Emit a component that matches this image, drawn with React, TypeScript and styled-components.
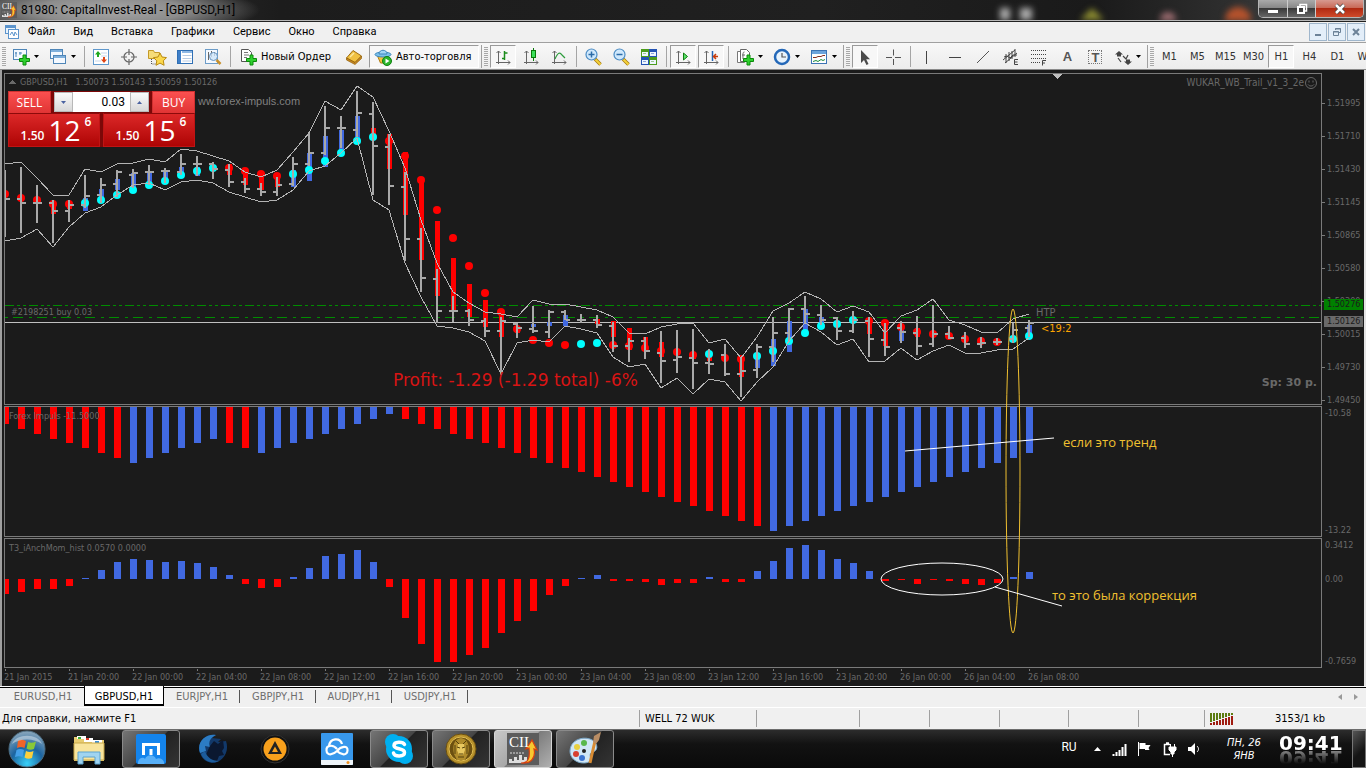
import React from 'react';
import styled, { createGlobalStyle, css } from 'styled-components';

const UI = '"DejaVu Sans Condensed", "DejaVu Sans", sans-serif';
const SEGOE = '"Open Sans", "Noto Sans", sans-serif';
const MENU = 'Roboto, "Open Sans", sans-serif';
const INK = '#1b1b1b';
const GRAY = '#696969';
const RED = '#ff0000';
const BLUE = '#4169e1';
const CYAN = '#00ffff';
const SILVER = '#a9a9a9';
const BAND = '#b4b4b4';
const GOLD = '#f0c030';
const GREEN = '#008c00';

const GlobalStyle = createGlobalStyle`
  * { box-sizing: border-box; }
  html, body { margin: 0; padding: 0; }
  body { background: ${INK}; font-family: ${UI}; font-size: 11px; }
  button, input { font: inherit; color: inherit; }
  svg { display: block; flex: none; }
`;

/* ---------- chart data ---------- */

// Chart space: bar i is centred on x = 5 + 16 * i.
const barX = (i: number) => 5 + 16 * i;

type Tone = 'r' | 'b' | '';
type Candle = [number, number, number, number, Tone, number, number, 'r' | 'c', number];
// high, low, open, close, body tone, body top, body bottom, dot tone, dot y
const candles: Candle[] = [
  [170, 237, 199, 199, '', 0, 0, 'r', 194],
  [167, 233, 199, 203, '', 0, 0, 'r', 198],
  [185, 223, 203, 203, '', 0, 0, 'r', 200],
  [200, 243, 203, 211, 'r', 203, 214, 'r', 204],
  [200, 222, 211, 205, 'r', 202, 209, 'r', 204],
  [175, 208, 205, 196, 'b', 198, 211, 'c', 203],
  [178, 203, 195, 185, 'b', 189, 200, 'c', 200],
  [170, 197, 184, 172, 'b', 179, 190, 'c', 195],
  [169, 188, 175, 173, 'b', 173, 187, 'c', 190],
  [165, 185, 172, 172, 'b', 172, 183, 'c', 185],
  [168, 183, 171, 171, 'b', 172, 180, 'c', 181],
  [154, 175, 172, 164, 'b', 167, 175, 'c', 175],
  [156, 176, 164, 164, 'b', 167, 176, 'c', 171],
  [162, 179, 164, 169, '', 0, 0, 'c', 168],
  [164, 187, 170, 182, 'r', 164, 175, 'r', 168],
  [178, 193, 182, 189, 'r', 168, 185, 'r', 171],
  [183, 196, 189, 192, 'r', 172, 190, 'r', 174],
  [177, 196, 192, 185, 'r', 174, 187, 'r', 176],
  [157, 186, 184, 164, 'b', 170, 187, 'c', 174],
  [132, 166, 164, 153, 'b', 153, 181, 'c', 170],
  [106, 155, 153, 128, 'b', 136, 167, 'c', 161],
  [116, 148, 128, 128, 'b', 130, 150, 'c', 153],
  [91, 137, 130, 113, 'b', 116, 140, 'c', 141],
  [102, 195, 114, 146, 'r', 128, 134, 'c', 137],
  [134, 205, 147, 186, 'r', 134, 169, 'r', 141],
  [172, 261, 187, 239, 'r', 152, 215, 'r', 156],
  [228, 292, 239, 278, 'r', 180, 260, 'r', 180],
  [269, 323, 279, 311, 'r', 221, 296, 'r', 210],
  [296, 322, 311, 311, 'r', 258, 310, 'r', 238],
  [309, 326, 311, 320, 'r', 284, 317, 'r', 266],
  [318, 337, 321, 331, 'r', 300, 327, 'r', 293],
  [317, 375, 331, 321, 'r', 310, 337, 'r', 312],
  [323, 338, 324, 328, 'r', 327, 333, 'r', 329],
  [306, 333, 329, 331, 'b', 324, 327, 'r', 340],
  [310, 338, 332, 312, 'b', 322, 326, 'r', 343],
  [310, 320, 312, 320, 'b', 315, 326, 'r', 345],
  [314, 323, 320, 320, '', 0, 0, 'c', 344],
  [315, 328, 320, 325, 'r', 319, 324, 'c', 343],
  [322, 352, 326, 346, 'r', 321, 337, 'r', 345],
  [338, 362, 346, 341, 'r', 328, 350, 'r', 346],
  [337, 359, 341, 351, 'r', 337, 350, 'r', 348],
  [331, 383, 353, 361, 'r', 342, 357, 'r', 351],
  [330, 373, 360, 357, '', 0, 0, 'r', 352],
  [329, 389, 358, 363, 'r', 353, 359, 'r', 355],
  [349, 374, 363, 364, 'r', 355, 361, 'c', 354],
  [344, 376, 355, 374, '', 0, 0, 'r', 358],
  [357, 397, 374, 371, 'r', 358, 377, 'r', 359],
  [344, 378, 370, 347, 'b', 355, 368, 'c', 356],
  [317, 362, 347, 333, 'b', 339, 366, 'c', 351],
  [308, 342, 333, 309, 'b', 321, 352, 'c', 341],
  [296, 323, 309, 314, 'b', 309, 330, 'c', 333],
  [305, 325, 315, 320, 'b', 317, 327, 'c', 326],
  [317, 340, 318, 331, '', 0, 0, 'c', 324],
  [311, 333, 331, 320, '', 0, 0, 'c', 320],
  [317, 357, 321, 339, 'r', 318, 334, 'r', 321],
  [323, 356, 340, 347, 'r', 322, 346, 'r', 323],
  [321, 343, 328, 332, 'b', 328, 341, 'r', 327],
  [316, 355, 333, 346, 'r', 328, 337, 'r', 332],
  [305, 347, 344, 334, '', 0, 0, 'r', 334],
  [326, 339, 334, 338, '', 0, 0, 'r', 336],
  [332, 348, 338, 344, '', 0, 0, 'r', 339],
  [337, 348, 344, 343, '', 0, 0, 'r', 341],
  [338, 345, 342, 342, '', 0, 0, 'r', 342],
  [323, 343, 339, 330, '', 0, 0, 'c', 339],
  [320, 337, 328, 323, 'b', 325, 335, 'c', 336],
];

const upper = [164, 162, 178, 195, 195, 169, 172, 164, 163, 159, 162, 149, 151, 156, 161, 172, 177, 170, 152, 133, 101, 110, 86, 97, 131, 168, 220, 263, 292, 303, 312, 314, 317, 300, 304, 304, 307, 310, 317, 333, 334, 327, 324, 323, 343, 339, 358, 337, 311, 303, 292, 299, 312, 306, 312, 333, 316, 310, 299, 320, 325, 332, 333, 319, 314];
const lower = [241, 238, 229, 247, 227, 213, 207, 195, 185, 183, 190, 182, 180, 183, 192, 197, 202, 200, 190, 171, 166, 153, 138, 200, 210, 263, 297, 326, 328, 332, 341, 374, 343, 340, 342, 326, 329, 333, 357, 367, 364, 388, 378, 394, 379, 382, 401, 382, 367, 341, 323, 332, 345, 339, 362, 361, 348, 360, 351, 345, 353, 353, 350, 349, 338];

const impulseDepth = [7, 12, 17, 22, 27, 32, 36, 41, 46, 51, 56, 61, 65, 70, 75, 80, 85, 90, 95, 99, 104, 109, 114, 119, 124];
const impulse: [number, Tone][] = [
  ...[2, 3, 4, 5, 6, 7, 8, 9].map((l): [number, Tone] => [l, 'r']),
  ...[10, 9, 8, 7, 6, 5].map((l): [number, Tone] => [l, 'b']),
  ...[6, 7].map((l): [number, Tone] => [l, 'r']),
  ...[8, 7, 6, 5, 4, 3, 2, 1, 0].map((l): [number, Tone] => [l, 'b']),
  ...Array.from({ length: 23 }, (_, k): [number, Tone] => [k + 1, 'r']),
  ...Array.from({ length: 17 }, (_, k): [number, Tone] => [24 - k, 'b']),
];

const momentum = [-15, -13, -10, -10, -7, 1, 9, 17, 20, 19, 17, 18, 16, 12, 4, -5, -9, -8, 2, 11, 23, 25, 29, 17, -8, -39, -65, -83, -83, -76, -69, -54, -42, -32, -16, -7, 1, 4, -2, -2, -3, -6, -4, -4, 2, -3, -3, 8, 18, 31, 34, 29, 20, 16, 8, -2, -1, -5, -1, -2, -5, -6, -4, 2, 7];

const dates = ['21 Jan 2015', '21 Jan 20:00', '22 Jan 00:00', '22 Jan 04:00', '22 Jan 08:00', '22 Jan 12:00', '22 Jan 16:00', '22 Jan 20:00', '23 Jan 00:00', '23 Jan 04:00', '23 Jan 08:00', '23 Jan 12:00', '23 Jan 16:00', '23 Jan 20:00', '26 Jan 00:00', '26 Jan 04:00', '26 Jan 08:00'];
const prices = ['1.51995', '1.51710', '1.51430', '1.51145', '1.50865', '1.50580', '1.50300', '1.50015', '1.49730', '1.49450'];

/* ---------- frame ---------- */

const Screen = styled.div`
  display: flex;
  flex-direction: column;
  min-height: 100vh;
  overflow: hidden;
`;

const TitleBar = styled.header`
  position: relative;
  display: flex;
  align-items: center;
  height: 21px;
  padding-left: 1px;
  overflow: hidden;
  border-bottom: 1px solid #b8b8b8;
  background:
    radial-gradient(ellipse 150px 26px at 110px 10px, #a8a8a8 0, #8c8c8c 50%, transparent 100%),
    linear-gradient(90deg, #3a3a3a 0, #1c1c1c 280px, #202020 60%, #1a1a1a 80%, #2e2e2e 90%, #555 100%);
`;

const TitleText = styled.h1`
  margin: 0 0 0 4px;
  font: 400 12px/20px ${MENU};
  color: #000;
  white-space: nowrap;
`;

const Blobs = styled.svg`
  position: absolute;
  right: 84px;
  top: 0;
  filter: blur(3px);
`;

const WindowButtons = styled.div`
  display: flex;
  align-self: flex-start;
  height: 18px;
  margin-left: auto;
  margin-right: 2px;
  border: 1px solid #b5b5b5;
  border-top: 0;
  border-radius: 0 0 5px 5px;
  overflow: hidden;
  z-index: 1;
`;

const WindowButton = styled.button<{ $close?: boolean }>`
  display: flex;
  align-items: center;
  justify-content: center;
  width: ${(p) => (p.$close ? 48 : 28)}px;
  padding: 0;
  border: 0;
  background: ${(p) =>
    p.$close
      ? 'linear-gradient(#d79a90 0, #c96a58 45%, #b02a12 50%, #cf4a2a 100%)'
      : 'linear-gradient(#aaa 0, #888 45%, #3a3a3a 50%, #666 100%)'};
  & + & { border-left: 1px solid #ccc; }
`;

const MenuBar = styled.nav`
  display: flex;
  align-items: center;
  height: 22px;
  padding: 0 1px 0 5px;
  background: #f0f0f0;
  border-top: 1px solid #222;
  border-bottom: 1px solid #a0a0a0;
  font: 11px/18px ${MENU};
  color: #000;
`;

const MenuItems = styled.div`
  display: flex;
  gap: 18px;
  margin-left: 9px;
`;

const MenuItem = styled.button`
  padding: 0;
  border: 0;
  background: none;
  white-space: nowrap;
`;

const ChildButtons = styled.div`
  display: flex;
  gap: 1px;
  margin-left: auto;
`;

const ChildButton = styled.button`
  display: flex;
  align-items: center;
  justify-content: center;
  width: 18px;
  height: 18px;
  padding: 0;
  border: 1px solid #9fb6cc;
  background: #e3eef9;
`;

/* ---------- toolbar ---------- */

const ToolBar = styled.div`
  display: flex;
  align-items: center;
  height: 27px;
  padding-top: 1px;
  overflow: hidden;
  background: linear-gradient(#f8f8f8, #ececec);
  border-bottom: 1px solid #8a8a8a;
  color: #333;
`;

const ToolGroup = styled.div`
  display: flex;
  flex: none;
  align-items: center;
  padding-left: 2px;
  & + & { border-left: 1px solid #a0a0a0; }
`;

const Grip = styled.span`
  width: 4px;
  height: 19px;
  margin-right: 2px;
  background: repeating-linear-gradient(#a8a8a8 0 1px, #f4f4f4 1px 2px);
`;

const ToolButton = styled.button<{ $on?: boolean; $menu?: boolean; $label?: boolean }>`
  display: flex;
  flex: none;
  align-items: center;
  justify-content: center;
  gap: 4px;
  width: 26px;
  height: 23px;
  margin-right: 2px;
  padding: 0;
  border: 1px solid transparent;
  background: none;
  white-space: nowrap;
  ${(p) => p.$on && css`
    border-color: #9a9a9a #fff #fff #9a9a9a;
    background: #f7f7f7;
  `}
  ${(p) => p.$menu && css`
    width: 35px;
    justify-content: flex-start;
    padding-left: 3px;
  `}
  ${(p) => p.$label && css`
    width: auto;
    padding: 0 7px 0 4px;
    color: #000;
  `}
`;

const Divider = styled.span`
  flex: none;
  width: 1px;
  height: 21px;
  margin: 0 3px 0 2px;
  background: #a5a5a5;
`;

/* ---------- chart window ---------- */

const ChartWindow = styled.main`
  position: relative;
  display: flex;
  flex: 1 0 auto;
  flex-direction: column;
  padding: 3px 1px 0 4px;
  background: ${INK};
  border-right: 2px solid #e4e4e4;
  color: ${GRAY};
  font-size: 9px;
  &::before {
    content: '';
    position: absolute;
    left: 0;
    top: 0;
    bottom: 0;
    width: 2px;
    background: #a0a0a0;
  }
`;

const Pane = styled.section<{ $height: number }>`
  display: flex;
  flex: ${(p) => p.$height} 0 ${(p) => p.$height}px;
  margin-bottom: 1px;
`;

const Plot = styled.div`
  position: relative;
  flex: 1;
  min-width: 0;
  overflow: hidden;
  border: 1px solid #7a7a7a;
`;

const PlotArt = styled.svg`
  position: absolute;
  inset: 0;
  width: 100%;
  height: 100%;
`;

const Scale = styled.div<{ $spread?: boolean }>`
  position: relative;
  display: flex;
  flex-direction: column;
  justify-content: ${(p) => (p.$spread ? 'space-between' : 'flex-start')};
  width: 41px;
  padding-top: ${(p) => (p.$spread ? 0 : 25)}px;
`;

const PriceLabel = styled.span`
  position: relative;
  height: 33px;
  padding-left: 5px;
  line-height: 10px;
  &:last-of-type { height: 10px; }
  &::before {
    content: '';
    position: absolute;
    left: 0;
    top: 5px;
    width: 3px;
    height: 1px;
    background: #7a7a7a;
  }
`;

const ScaleEnd = styled.span`
  padding-left: 3px;
  line-height: 14px;
`;

const ZeroLabel = styled(ScaleEnd)`
  position: absolute;
  top: 34px;
`;

const PriceTag = styled.strong<{ $top: number; $bg: string }>`
  position: absolute;
  left: 2px;
  right: 0;
  top: ${(p) => p.$top}px;
  padding-left: 3px;
  background: ${(p) => p.$bg};
  color: ${INK};
  font-weight: 400;
  line-height: 11px;
`;

const PlotNote = styled.span<{ $top: number; $indent?: boolean }>`
  position: absolute;
  left: ${(p) => (p.$indent ? 15 : 4)}px;
  top: ${(p) => p.$top}px;
  line-height: 12px;
  white-space: pre;
`;

const Expert = styled.span`
  position: absolute;
  right: 4px;
  top: 3px;
  display: flex;
  align-items: center;
  gap: 1px;
  font-size: 10px;
  line-height: 12px;
`;

const Spread = styled.span`
  position: absolute;
  right: 4px;
  bottom: 14px;
  font: 700 11px/14px "DejaVu Sans", sans-serif;
`;

const TimeAxis = styled.div`
  display: flex;
  height: 17px;
  overflow: hidden;
`;

const TimeLabel = styled.span`
  position: relative;
  flex: none;
  width: 64px;
  line-height: 17px;
  white-space: nowrap;
  &::before {
    content: '';
    position: absolute;
    left: 1px;
    top: 0;
    width: 1px;
    height: 2px;
    background: #7a7a7a;
  }
`;

const Annotations = styled.svg`
  position: absolute;
  inset: 0;
  width: 100%;
  height: 100%;
  pointer-events: none;
`;

/* ---------- one-click trading ---------- */

const TradePanel = styled.form`
  position: absolute;
  left: 3px;
  top: 17px;
  width: 187px;
  background: #7c0808;
  color: #fff;
  font-family: ${SEGOE};
`;

const TradeRow = styled.div<{ $prices?: boolean }>`
  display: flex;
  justify-content: space-between;
  gap: 3px;
  height: ${(p) => (p.$prices ? 34 : 22)}px;
`;

const SideButton = styled.button`
  flex: none;
  width: 43px;
  padding: 0;
  border: 1px solid #d03030;
  border-bottom: 0;
  background: linear-gradient(#fb5050, #e03434);
  font-size: 12px;
  line-height: 20px;
`;

const Stepper = styled.div`
  display: flex;
  flex: 1;
  min-width: 0;
  height: 20px;
  margin-top: 1px;
  background: #fff;
`;

const StepButton = styled.button`
  display: flex;
  flex: none;
  align-items: center;
  justify-content: center;
  width: 19px;
  padding: 0;
  border: 1px solid #b8b8b8;
  background: linear-gradient(#fafafa, #d8d8d8);
`;

const Volume = styled.input`
  flex: 1;
  width: 0;
  min-width: 0;
  padding: 0 5px;
  border: 0;
  background: #fff;
  color: #000;
  font: 12px/20px ${MENU};
  text-align: right;
`;

const PriceButton = styled.button`
  display: flex;
  flex: 1;
  align-items: flex-end;
  justify-content: center;
  gap: 4px;
  padding: 0 0 1px 4px;
  border: 1px solid #c01414;
  border-top-color: #8c0a0a;
  background: linear-gradient(#dc2828, #ae0404);
`;

const PriceSmall = styled.span`
  font-size: 12px;
  font-weight: 600;
  line-height: 18px;
`;

const PriceBig = styled.span`
  font-size: 28px;
  line-height: 30px;
`;

const PriceTick = styled.span`
  align-self: flex-start;
  font-size: 12px;
  font-weight: 600;
  line-height: 16px;
`;

/* ---------- tabs and status ---------- */

const TabBar = styled.nav`
  display: flex;
  height: 22px;
  padding-left: 2px;
  background: #f0f0f0;
  border-bottom: 1px solid #fff;
  box-shadow: inset 0 1px #fff, inset 0 2px #000;
  font-size: 11px;
  color: #6e6e6e;
`;

const Tab = styled.a<{ $active?: boolean; $first?: boolean }>`
  position: relative;
  width: ${(p) => (p.$active ? 80 : p.$first ? 82 : 76)}px;
  height: 20px;
  color: inherit;
  line-height: 21px;
  text-align: center;
  text-decoration: none;
  ${(p) => p.$active && css`
    border: solid #000;
    border-width: 0 1px 2px;
    background: #fff;
    color: #000;
  `}
  ${(p) => !p.$active && !p.$first && css`
    &::after {
      content: '';
      position: absolute;
      right: 0;
      top: 4px;
      width: 1px;
      height: 13px;
      background: #555;
    }
  `}
`;

const TabArrows = styled.div`
  display: flex;
  align-items: center;
  gap: 4px;
  margin-left: auto;
  padding-right: 4px;
`;

const ArrowButton = styled.button`
  padding: 3px 4px;
  border: 0;
  background: none;
`;

const StatusBar = styled.footer`
  display: flex;
  align-items: center;
  height: 21px;
  background: #f0f0f0;
  color: #000;
  font-size: 11px;
`;

const StatusHelp = styled.span`
  flex: 1;
  padding-left: 2px;
  white-space: nowrap;
`;

const StatusCell = styled.span<{ $width: number }>`
  display: flex;
  flex: none;
  align-items: center;
  width: ${(p) => p.$width}px;
  height: 17px;
  padding-left: 5px;
  border-left: 1px solid #a0a0a0;
`;

const Traffic = styled.span`
  flex: 1;
  padding-right: 41px;
  text-align: right;
`;

/* ---------- task bar ---------- */

const TaskBar = styled.div`
  display: flex;
  align-items: center;
  height: 39px;
  border-top: 1px solid #6c6c6c;
  background: linear-gradient(#2c2c2c 0, #121212 14px, #0a0a0a 100%);
  color: #fff;
`;

const StartButton = styled.button`
  width: 54px;
  height: 38px;
  margin-right: 6px;
  padding: 0 0 0 8px;
  border: 0;
  background: none;
`;

const Task = styled.button<{ $state?: 'open' | 'active' }>`
  display: flex;
  align-items: center;
  justify-content: center;
  width: 58px;
  height: 38px;
  margin-right: 4px;
  padding: 0;
  border: 1px solid transparent;
  border-radius: 3px;
  background: none;
  ${(p) => p.$state === 'open' && css`
    border-color: #8a8a8a;
    background: linear-gradient(135deg, #757575 0, #454545 48%, #222 50%, #343434 100%);
  `}
  ${(p) => p.$state === 'active' && css`
    border-color: #d5d5d5;
    background: linear-gradient(135deg, #c8c8c8 0, #a8a8a8 48%, #7c7c7c 50%, #b0b0b0 100%);
  `}
`;

const Tray = styled.div`
  display: flex;
  align-items: center;
  height: 100%;
  margin-left: auto;
`;

const Lang = styled.button`
  width: 18px;
  margin: 0 15px 4px 0;
  padding: 0;
  border: 0;
  background: none;
  font: 12px/16px ${MENU};
`;

const TrayIcons = styled.div`
  display: flex;
  align-items: center;
  gap: 10px;
`;

const DateText = styled.div`
  width: 50px;
  margin-left: 18px;
  font: italic 400 11px/13px ${UI};
  text-align: center;
`;

const Clock = styled.time`
  width: 66px;
  margin: -12px 7px 0 10px;
  font: 700 20px/20px "DejaVu Sans", sans-serif;
  -webkit-box-reflect: below -5px linear-gradient(transparent 20%, rgba(255, 255, 255, 0.6));
`;

const ShowDesktop = styled.button`
  width: 14px;
  height: 38px;
  padding: 0;
  border: 1px solid #777;
  background: linear-gradient(135deg, #555, #151515 60%);
`;

/* ---------- icons ---------- */

const Icon = ({ w = 18, h = w, children }: { w?: number; h?: number; children: React.ReactNode }) => (
  <svg width={w} height={h} viewBox={`0 0 ${w} ${h}`} fill="none" aria-hidden="true">{children}</svg>
);

const Caret = () => (
  <svg width="5" height="3" viewBox="0 0 5 3" aria-hidden="true"><path d="M0 0H5L2.5 3Z" fill="#000" /></svg>
);

const Plus = () => (
  <path d="M11 7h3v3.500h3.500v3h-3.500v3.500h-3v-3.500h-3.500v-3h3.500z" fill="#2fd02f" stroke="#0a8a0a" />
);

const Axes = () => (
  <path d="M4.500 16V3M2.500 5L4.500 3L6.500 5M2 14.500H16M14 12.500L16 14.500L14 16.500" stroke="#666" />
);

const NewChart = () => (
  <Icon>
    <rect x="1.500" y="1.500" width="13" height="10" fill="#f4f9ff" stroke="#4f86b8" />
    <path d="M4 4v5M3 5h2M8 4v3M7 5h3" stroke="#4f86b8" />
    <Plus />
  </Icon>
);
const Profiles = () => (
  <Icon>
    <rect x="1.500" y="1.500" width="12" height="9" fill="#f4f9ff" stroke="#4f86b8" />
    <path d="M2 3H13" stroke="#7fb0dc" strokeWidth="2" />
    <rect x="4.500" y="7.500" width="12" height="8" fill="#f4f9ff" stroke="#4f86b8" />
    <path d="M5 9H16" stroke="#7fb0dc" strokeWidth="2" />
  </Icon>
);
const Market = () => (
  <Icon>
    <rect x="1.500" y="1.500" width="15" height="15" fill="#fff" stroke="#5f98cc" />
    <path d="M9 5h6M3 13h6M9 8h6" stroke="#c8d8ea" />
    <path d="M6 3l3 3.500h-2v2.500h-2v-2.500h-2z" fill="#1fa81f" />
    <path d="M12 15l3-3.500h-2v-2.500h-2v2.500h-2z" fill="#e04414" />
  </Icon>
);
const Crosshair = () => (
  <Icon>
    <circle cx="9" cy="9" r="5" stroke="#666" strokeWidth="1.200" />
    <path d="M9 1V7M9 11V17M1 9H7M11 9H17" stroke="#666" strokeWidth="1.200" />
  </Icon>
);
const Favorites = () => (
  <Icon w={20} h={18}>
    <path d="M1.500 2.500h5l1 2h5v6h-11z" fill="#f6dc78" stroke="#c49a28" />
    <path d="M4.500 11v5h4" stroke="#555" strokeDasharray="1 1" />
    <path d="M13 5l2 4 4.500.6-3.200 3.200.8 4.500-4.100-2.200-4 2.200.8-4.500L6.500 9.600 11 9z" fill="#fbd84c" stroke="#b98a10" />
  </Icon>
);
const Terminal = () => (
  <Icon>
    <rect x="1.500" y="2.500" width="15" height="13" fill="#fff" stroke="#2f6fb4" />
    <rect x="2" y="3" width="3" height="12" fill="#3f7fc8" />
    <path d="M6 4H16" stroke="#8fb8e4" strokeWidth="2" />
    <path d="M6.500 7.500h9M6.500 10.500h9M6.500 13h9" stroke="#b8cce4" />
  </Icon>
);
const Tester = () => (
  <Icon>
    <rect x="1.500" y="1.500" width="12" height="14" fill="#f4f9ff" stroke="#6c9cc8" />
    <path d="M4.500 4v8M7.500 3v6M10.500 4v4" stroke="#666" />
    <circle cx="9.500" cy="8.500" r="4" fill="#cfe6fa" fillOpacity=".8" stroke="#6894c0" />
    <path d="M12.500 12l4 4" stroke="#c8902c" strokeWidth="2.500" />
  </Icon>
);
const OrderIcon = () => (
  <Icon>
    <path d="M2.500 1.500h7l3 3v9h-10z" fill="#fff" stroke="#555" />
    <path d="M5 4.500h4M5 7h5M5 9.500h3" stroke="#777" />
    <Plus />
  </Icon>
);
const Book = () => (
  <Icon>
    <path d="M1.500 10L8 2.500L16.500 8L10 14.500Z" fill="#f0c040" stroke="#a06c10" />
    <path d="M1.500 10L10 14.500L16.500 8V10.500L10 16.500L1.500 12Z" fill="#c88820" stroke="#90600c" strokeWidth=".7" />
    <path d="M5 9L9 5" stroke="#fbe8a0" strokeWidth="1.500" />
  </Icon>
);
const AutoTrade = () => (
  <Icon>
    <path d="M3.500 8h11l-3 7h-5z" fill="#f4c23c" stroke="#b07c14" />
    <ellipse cx="9" cy="6.500" rx="8" ry="2.500" fill="#7cc0ea" stroke="#3f88bc" />
    <path d="M5 6c0-5 8-5 8 0z" fill="#a0d4f4" stroke="#3f88bc" />
    <circle cx="13" cy="13" r="4.500" fill="#2cb52c" stroke="#108010" />
    <path d="M11.500 10.500v5l4-2.500z" fill="#fff" />
  </Icon>
);
const BarsIcon = () => <Icon><Axes /><path d="M10.500 3V12M8 10.500h2.500M10.500 5h3" stroke="#1c8c1c" strokeWidth="1.500" /></Icon>;
const CandleIcon = () => <Icon><Axes /><path d="M11.500 0V13" stroke="#0a7a0a" /><rect x="9.500" y="2.500" width="4" height="7" fill="#3ce05c" stroke="#0a7a0a" /></Icon>;
const LineIcon = () => <Icon><Axes /><path d="M5 11C8 4 10 4 12 7L15 10" stroke="#2c9c3c" strokeWidth="1.200" /></Icon>;
const Zoom = ({ plus }: { plus?: boolean }) => (
  <Icon>
    <path d="M11 11l5.500 5.500" stroke="#a87c10" strokeWidth="3.500" />
    <path d="M11.500 11.500l5 5" stroke="#f4d23c" strokeWidth="2" />
    <circle cx="7.500" cy="6.500" r="5.500" fill="#cfe8fc" stroke="#4c8cc4" strokeWidth="1.200" />
    <path d={plus ? 'M4.500 6.500h6M7.500 3.500v6' : 'M4.500 6.500h6'} stroke="#2c6ca8" strokeWidth="1.500" />
  </Icon>
);
const Tile = () => (
  <Icon>
    {[[1, 1, '#4c9c1c'], [9, 1, '#2454b4'], [1, 9, '#2454b4'], [9, 9, '#4c9c1c']].map(([x, y, c]) => (
      <g key={`${x}-${y}`}>
        <rect x={Number(x)} y={Number(y)} width="8" height="8" fill={String(c)} />
        <rect x={Number(x) + 1} y={Number(y) + 3} width="6" height="4" fill="#eef6ff" />
        <rect x={Number(x) + 2} y={Number(y) + 4} width="3" height="1" fill={String(c)} fillOpacity=".5" />
      </g>
    ))}
  </Icon>
);
const Scroll = () => <Icon><Axes /><path d="M9.500 5v7l4-3.500z" fill="#5ce06c" stroke="#108010" /></Icon>;
const Shift = () => <Icon><Axes /><path d="M10.500 3V13" stroke="#2464b4" strokeWidth="1.500" /><path d="M16 8.500h-4M14 6l-2.500 2.500l2.500 2.500" stroke="#c83c0c" strokeWidth="1.500" /></Icon>;
const Indicators = () => (
  <Icon>
    <path d="M1.500 3.500h7v11h-7z" fill="#fff" stroke="#777" />
    <path d="M4.500 1.500h6l3 3v9h-9z" fill="#fff" stroke="#666" />
    <path d="M8.500 4c-2 0-1.500 2-1.500 7M6 7h3" stroke="#666" />
    <Plus />
  </Icon>
);
const ClockIcon = () => (
  <Icon>
    <circle cx="9" cy="9" r="7" fill="#e8f3fc" stroke="#2468b8" strokeWidth="2.500" />
    <path d="M9 5v4h4" stroke="#555" strokeWidth="1.200" />
  </Icon>
);
const Template = () => (
  <Icon>
    <rect x="1.500" y="2.500" width="15" height="13" fill="#fff" stroke="#3c74b4" />
    <rect x="2" y="3" width="14" height="3" fill="#6ca4dc" />
    <path d="M3 9.500h3l2-1h3l2-1h2" stroke="#883020" />
    <path d="M3 13.500l3-1 2 1 3-2 2 1 2-1" stroke="#1c8c3c" />
  </Icon>
);
const Cursor = () => <Icon><path d="M5 2V15L8 12L10.500 17L12.500 16L10.200 11.300H14Z" fill="#4a4a4a" /></Icon>;
const Cross = () => <Icon><path d="M9.500 1.500v6M9.500 11v6M2 9.500h6M11 9.500h6" stroke="#555" /></Icon>;
const VLine = () => <Icon><path d="M8.500 3v13" stroke="#444" /></Icon>;
const HLine = () => <Icon><path d="M3 9.500h12" stroke="#444" /></Icon>;
const Diagonal = () => <Icon><path d="M3 15L15 3" stroke="#555" /></Icon>;
const Channel = () => (
  <Icon>
    <path d="M1 12L13 2M3 15L15 5M4 6v9M7 4v9M10 3v8M13 1v8M2 9l3-1 3 2 3-3 4 0" stroke="#444" />
    <path d="M16 11.500h-3.500v5H16M12.500 14H15.500" stroke="#444" />
  </Icon>
);
const Fibo = () => (
  <Icon>
    <path d="M1 2.500h15M1 6.500h15M1 10.500h15M1 14.500h9" stroke="#444" strokeDasharray="1 1" />
    <path d="M16 12.500h-3.500v5M12.500 15H15" stroke="#444" />
  </Icon>
);
const Letter = styled.span`
  font: 700 13px/18px "Liberation Sans", sans-serif;
  color: #555;
`;
const TextLabel = styled(Letter)`
  width: 14px;
  height: 14px;
  border: 1px dotted #777;
  line-height: 13px;
  text-align: center;
`;
const Arrows = () => (
  <Icon>
    <path d="M5 3l4 3.500h-2v2h-4v-2h-2zM14 17l-4-3.500h2v-2h4v2h2z" fill="#444" />
    <path d="M4 10l3 4M9 8l3 3 2-4" stroke="#444" strokeWidth="1.200" />
  </Icon>
);

/* ---------- chart pieces ---------- */

const linePoints = (ys: number[]) => ys.map((y, i) => `${barX(i)},${y}`).join(' ');

const PriceArt = () => (
  <PlotArt aria-label="GBPUSD H1">
    <defs>
      <pattern id="take" width="24" height="1" patternUnits="userSpaceOnUse">
        <path d="M0 0h9v1H0zM12 0h3v1h-3zM18 0h3v1h-3z" fill={GREEN} />
      </pattern>
      <pattern id="entry" width="24" height="1" patternUnits="userSpaceOnUse">
        <path d="M0 0h3v1H0zM8 0h10v1H8z" fill={GREEN} />
      </pattern>
    </defs>
    <rect y="231" width="100%" height="1" fill="url(#take)" />
    <rect y="243" width="100%" height="1" fill="url(#entry)" />
    <rect y="248" width="100%" height="1" fill="#c0c0c0" />
    <g transform="translate(-5 -74)" shapeRendering="crispEdges">
      {candles.map(([, , , , tone, top, bottom], i) =>
        tone ? <rect key={i} x={barX(i) - 2} y={top} width="5" height={bottom - top} fill={tone === 'r' ? RED : BLUE} /> : null
      )}
      {candles.map((c, i) => (
        <circle key={i} cx={barX(i)} cy={c[8]} r="4" fill={c[7] === 'r' ? RED : CYAN} shapeRendering="auto" />
      ))}
      {candles.map(([high, low, open, close], i) => (
        <g key={i} fill={SILVER}>
          <rect x={barX(i) - 1} y={high} width="2" height={low - high} />
          <rect x={barX(i) - 4} y={open - 1} width="3" height="2" />
          <rect x={barX(i) + 1} y={close - 1} width="4" height="2" />
        </g>
      ))}
      <polyline points={linePoints(upper)} fill="none" stroke={BAND} />
      <polyline points={linePoints(lower)} fill="none" stroke={BAND} />
      <path d="M1052 74h10l-5 5z" fill="#c0c0c0" />
      <path d="M8 84h8l-4-4z" fill={GRAY} />
    </g>
    <text x="193" y="31" fontFamily="Liberation Sans, sans-serif" fontSize="11" fill="#808080">ww.forex-impuls.com</text>
    <text x="6" y="241" fontSize="9" fill={GRAY}>#2198251 buy 0.03</text>
    <text x="1031" y="242" fontSize="11" fill={GRAY}>HTP</text>
    <text x="1036" y="258" fontSize="11" fill="#ffa500">&lt;19:2</text>
    <text x="388" y="312" fontFamily="DejaVu Sans, sans-serif" fontSize="17" fill="#d81414">Profit: -1.29 (-1.29 total) -6%</text>
  </PlotArt>
);

const ImpulseArt = () => (
  <PlotArt aria-label="Forex Impuls">
    {impulse.map(([level, tone], i) => (
      <rect key={i} x={16 * i - 3} y="0" width="7" height={impulseDepth[level]} fill={tone === 'r' ? RED : BLUE} />
    ))}
  </PlotArt>
);

const MomentumArt = () => (
  <PlotArt aria-label="T3 momentum">
    {momentum.map((v, i) => (
      <rect key={i} x={16 * i - 3} y={v > 0 ? 40 - v : 40} width="7" height={Math.abs(v)} fill={v > 0 ? BLUE : RED} />
    ))}
  </PlotArt>
);

const Trade = () => (
  <TradePanel onSubmit={(e) => e.preventDefault()}>
    <TradeRow>
      <SideButton type="button">SELL</SideButton>
      <Stepper>
        <StepButton type="button" aria-label="Less"><Icon w={5} h={3}><path d="M0 0H5L2.500 3Z" fill="#4a62a0" /></Icon></StepButton>
        <Volume aria-label="Volume" defaultValue="0.03" />
        <StepButton type="button" aria-label="More"><Icon w={5} h={3}><path d="M0 3H5L2.500 0Z" fill="#4a62a0" /></Icon></StepButton>
      </Stepper>
      <SideButton type="button">BUY</SideButton>
    </TradeRow>
    <TradeRow $prices>
      {['12', '15'].map((p) => (
        <PriceButton key={p} type="button">
          <PriceSmall>1.50</PriceSmall><PriceBig>{p}</PriceBig><PriceTick>6</PriceTick>
        </PriceButton>
      ))}
    </TradeRow>
  </TradePanel>
);

const Cii = ({ size }: { size: number }) => (
  <svg width={size} height={size} viewBox="0 0 32 32" aria-hidden="true">
    <rect width="32" height="32" fill="#5c5c5c" />
    <path d="M2 30V26H5V28H7V24H10V27H12V22H15V27H17V24H20V30Z" fill="#ddd" />
    <path d="M3 20H18" stroke="#ddd" strokeDasharray="2 1" />
    <path d="M14 30C22 30 23 24 22 15L19 16L25 7L30 17L27 16C29 25 24 31 14 30Z" fill="#f8c830" stroke="#d84010" strokeWidth="1.200" />
    <text x="2" y="14" fontFamily="Liberation Serif, serif" fontSize="15" fill="#fff">CII</text>
  </svg>
);

/* ---------- page ---------- */

export default function App() {
  return (
    <Screen>
      <GlobalStyle />
      <TitleBar>
        <Cii size={16} />
        <TitleText>81980: CapitalInvest-Real - [GBPUSD,H1]</TitleText>
        <Blobs width="290" height="21" aria-hidden="true">
          <path d="M8 8H18V20H8zM28 8H40V20H28z" fill="#aaa" />
          <path d="M88 20l12-12 12 12z" fill="#8c8c30" />
          <circle cx="176" cy="20" r="8" fill="#9c6c70" />
          <circle cx="246" cy="20" r="13" fill="#b4522c" />
        </Blobs>
        <WindowButtons>
          <WindowButton aria-label="Minimize"><Icon w={12} h={12}><path d="M1 7h10v3H1z" fill="#fff" /></Icon></WindowButton>
          <WindowButton aria-label="Restore"><Icon w={12} h={12}><path d="M4 4V1.500H10.500V8H8" stroke="#fff" strokeWidth="1.500" /><rect x="2" y="4" width="6" height="6" stroke="#fff" strokeWidth="2" /></Icon></WindowButton>
          <WindowButton $close aria-label="Close"><Icon w={12} h={12}><path d="M2 2L10 10M10 2L2 10" stroke="#444" strokeWidth="4" /><path d="M2 2L10 10M10 2L2 10" stroke="#fff" strokeWidth="2.500" /></Icon></WindowButton>
        </WindowButtons>
      </TitleBar>

      <MenuBar>
        <Icon w={14}>
          <rect x=".5" y=".5" width="10" height="8" fill="#eaf3fc" stroke="#5c94cc" />
          <path d="M1 2H10" stroke="#5c94cc" strokeWidth="2" />
          <rect x="3.500" y="4.500" width="10" height="9" fill="#fff" stroke="#5c94cc" />
          <path d="M5 10l2-3 2 4 1-4 2 3" stroke="#5c94cc" />
        </Icon>
        <MenuItems>
          {['Файл', 'Вид', 'Вставка', 'Графики', 'Сервис', 'Окно', 'Справка'].map((m) => <MenuItem key={m}>{m}</MenuItem>)}
        </MenuItems>
        <ChildButtons>
          <ChildButton aria-label="Minimize chart"><Icon w={10}><path d="M2 7h6v2H2z" fill="#6c8298" /></Icon></ChildButton>
          <ChildButton aria-label="Restore chart"><Icon w={10}><path d="M3.500 3V1.500h5v4H7M1.500 4.500h5v4h-5zM1 5h6M3 2h6" stroke="#6c8298" /></Icon></ChildButton>
          <ChildButton aria-label="Close chart"><Icon w={10}><path d="M2 2L8 8M8 2L2 8" stroke="#6c8298" strokeWidth="2" /></Icon></ChildButton>
        </ChildButtons>
      </MenuBar>

      <ToolBar>
        <ToolGroup>
          <Grip />
          <ToolButton $menu aria-label="New chart"><NewChart /><Caret /></ToolButton>
          <ToolButton $menu aria-label="Profiles"><Profiles /><Caret /></ToolButton>
          <Divider />
          <ToolButton aria-label="Market watch"><Market /></ToolButton>
          <ToolButton aria-label="Data window"><Crosshair /></ToolButton>
          <ToolButton aria-label="Navigator"><Favorites /></ToolButton>
          <ToolButton aria-label="Terminal"><Terminal /></ToolButton>
          <ToolButton aria-label="Strategy tester"><Tester /></ToolButton>
          <Divider />
          <ToolButton $label><OrderIcon />Новый Ордер</ToolButton>
          <ToolButton aria-label="Editor"><Book /></ToolButton>
          <ToolButton $label $on><AutoTrade />Авто-торговля</ToolButton>
        </ToolGroup>
        <ToolGroup>
          <Grip />
          <ToolButton $on aria-label="Bars"><BarsIcon /></ToolButton>
          <ToolButton aria-label="Candles"><CandleIcon /></ToolButton>
          <ToolButton aria-label="Line"><LineIcon /></ToolButton>
          <Divider />
          <ToolButton aria-label="Zoom in"><Zoom plus /></ToolButton>
          <ToolButton aria-label="Zoom out"><Zoom /></ToolButton>
          <ToolButton aria-label="Tile windows"><Tile /></ToolButton>
          <Divider />
          <ToolButton $on aria-label="Auto scroll"><Scroll /></ToolButton>
          <ToolButton $on aria-label="Chart shift"><Shift /></ToolButton>
          <Divider />
          <ToolButton $menu aria-label="Indicators"><Indicators /><Caret /></ToolButton>
          <ToolButton $menu aria-label="Periods"><ClockIcon /><Caret /></ToolButton>
          <ToolButton $menu aria-label="Templates"><Template /><Caret /></ToolButton>
        </ToolGroup>
        <ToolGroup>
          <Grip />
          <ToolButton $on aria-label="Cursor"><Cursor /></ToolButton>
          <ToolButton aria-label="Crosshair"><Cross /></ToolButton>
          <Divider />
          <ToolButton aria-label="Vertical line"><VLine /></ToolButton>
          <ToolButton aria-label="Horizontal line"><HLine /></ToolButton>
          <ToolButton aria-label="Trend line"><Diagonal /></ToolButton>
          <ToolButton aria-label="Channel"><Channel /></ToolButton>
          <ToolButton aria-label="Fibonacci"><Fibo /></ToolButton>
          <ToolButton aria-label="Text"><Letter>A</Letter></ToolButton>
          <ToolButton aria-label="Text label"><TextLabel>T</TextLabel></ToolButton>
          <ToolButton $menu aria-label="Arrows"><Arrows /><Caret /></ToolButton>
        </ToolGroup>
        <ToolGroup>
          <Grip />
          {['M1', 'M5', 'M15', 'M30', 'H1', 'H4', 'D1', 'W1'].map((t) => <ToolButton key={t} $on={t === 'H1'}>{t}</ToolButton>)}
        </ToolGroup>
      </ToolBar>

      <ChartWindow>
        <Pane $height={332}>
          <Plot>
            <PriceArt />
            <PlotNote $top={2} $indent>{'GBPUSD,H1   1.50073 1.50143 1.50059 1.50126'}</PlotNote>
            <Expert>
              WUKAR_WB_Trail_v1_3_2e
              <Icon w={12}><circle cx="6" cy="6" r="5.500" stroke={GRAY} /><path d="M4 3.500v2M8 3.500v2M3 7.500c1.500 2 4.500 2 6 0" stroke={GRAY} /></Icon>
            </Expert>
            <Spread>Sp: 30 p.</Spread>
            <Trade />
          </Plot>
          <Scale>
            {prices.map((p) => <PriceLabel key={p}>{p}</PriceLabel>)}
            <PriceTag $top={226} $bg="#008000">1.50276</PriceTag>
            <PriceTag $top={243} $bg={GRAY}>1.50126</PriceTag>
          </Scale>
        </Pane>
        <Pane $height={131}>
          <Plot>
            <ImpulseArt />
            <PlotNote $top={3}>Forex Impuls -11.5000</PlotNote>
          </Plot>
          <Scale $spread><ScaleEnd>-10.58</ScaleEnd><ScaleEnd>-13.22</ScaleEnd></Scale>
        </Pane>
        <Pane $height={130}>
          <Plot>
            <MomentumArt />
            <PlotNote $top={3}>T3_iAnchMom_hist 0.0570 0.0000</PlotNote>
          </Plot>
          <Scale $spread><ScaleEnd>0.3412</ScaleEnd><ZeroLabel>0.00</ZeroLabel><ScaleEnd>-0.7659</ScaleEnd></Scale>
        </Pane>
        <TimeAxis>{dates.map((d) => <TimeLabel key={d}>{d}</TimeLabel>)}</TimeAxis>
        <Annotations aria-hidden="true">
          <g transform="translate(0 -70)" fill="none">
            <ellipse cx="1013" cy="471" rx="7" ry="162" stroke={GOLD} />
            <ellipse cx="942" cy="579" rx="61" ry="16" stroke="#fff" />
            <path d="M905 451L1054 438M995 587L1062 606" stroke="#fff" />
          </g>
          <g fontFamily="Open Sans, Noto Sans, sans-serif" fontSize="13" fill={GOLD}>
            <text x="1063" y="377">если это тренд</text>
            <text x="1052" y="530">то это была коррекция</text>
          </g>
        </Annotations>
      </ChartWindow>

      <TabBar>
        {['EURUSD,H1', 'GBPUSD,H1', 'EURJPY,H1', 'GBPJPY,H1', 'AUDJPY,H1', 'USDJPY,H1'].map((t, i) => (
          <Tab key={t} href={`#${t}`} $first={i === 0} $active={i === 1}>{t}</Tab>
        ))}
        <TabArrows>
          <ArrowButton aria-label="Previous"><Icon w={4} h={6}><path d="M4 0V6L0 3Z" fill="#999" /></Icon></ArrowButton>
          <ArrowButton aria-label="Next"><Icon w={4} h={6}><path d="M0 0V6L4 3Z" fill="#999" /></Icon></ArrowButton>
        </TabArrows>
      </TabBar>

      <StatusBar>
        <StatusHelp>Для справки, нажмите F1</StatusHelp>
        <StatusCell $width={117}>WELL 72 WUK</StatusCell>
        <StatusCell $width={103} />
        <StatusCell $width={70} />
        <StatusCell $width={70} />
        <StatusCell $width={69} />
        <StatusCell $width={70} />
        <StatusCell $width={66} />
        <StatusCell $width={162}>
          <Icon w={24} h={12}>
            {Array.from({ length: 8 }, (_, i) => (
              <g key={i}>
                <rect x={i * 3} y="0" width="2" height={9 - i} fill="#5c7c10" />
                <rect x={i * 3} y={10 - i} width="2" height={2 + i} fill="#a01c10" />
              </g>
            ))}
          </Icon>
          <Traffic>3153/1 kb</Traffic>
        </StatusCell>
      </StatusBar>

      <TaskBar>
        <StartButton aria-label="Start">
          <Icon w={38}>
            <defs>
              <radialGradient id="orb" cx=".5" cy=".9" r=".9">
                <stop offset="0" stopColor="#38d0f8" /><stop offset=".5" stopColor="#1c64a0" /><stop offset="1" stopColor="#8ca8bc" />
              </radialGradient>
            </defs>
            <circle cx="19" cy="19" r="18" fill="url(#orb)" stroke="#4c6c80" />
            <path d="M10 11C13 9 15 10 18 11L16.500 18C14 17 12 16.500 9 18Z" fill="#f06428" />
            <path d="M20 12C23 13 25 13 28 11.500L26 19C23.500 20 21 20 18.500 18.500Z" fill="#88c838" />
            <path d="M8.500 20C11 18.500 14 19 16 20L14.500 27C12 26 10 26 7 27Z" fill="#44a0e8" />
            <path d="M18 21C21 22.500 23 22 25.500 21L24 28C21.500 29 19 29 16.500 27.500Z" fill="#fcd03c" />
            <path d="M4 14C8 3 30 3 34 14C26 8 12 8 4 14Z" fill="#fff" fillOpacity=".4" />
          </Icon>
        </StartButton>
        <Task aria-label="Explorer">
          <Icon w={34} h={32}>
            <path d="M2 4h10l2 3h18v21H2z" fill="#e8cc70" />
            <path d="M5 3h9v3H5z" fill="#fff" /><path d="M6 4h3v2H6z" fill="#3cae3c" />
            <path d="M12 5h9v4h-9z" fill="#fff" /><path d="M14 5h3v2h-3z" fill="#d83c2c" />
            <path d="M20 7h10v4H20z" fill="#fff" /><path d="M23 8h4v2h-4z" fill="#3c90d8" />
            <path d="M2 10h30v17H2z" fill="#f8e49c" stroke="#c8a848" />
            <path d="M6 31V19h22v12h-5v-7H11v7z" fill="#a0d4f0" stroke="#5ca4d0" />
          </Icon>
        </Task>
        <Task $state="open" aria-label="Browser">
          <Icon w={30}>
            <rect width="30" height="30" rx="2" fill="#1484ec" />
            <path d="M2 28c1-5 6-5 7-3c2-5 9-5 11 0c3-2 7 0 8 3v2H2z" fill="#58b0f8" />
            <path d="M7.500 21V10.500H22.500V21" stroke="#fff" strokeWidth="3" />
            <path d="M15 21V15" stroke="#fff" strokeWidth="3" />
          </Icon>
        </Task>
        <Task aria-label="Mail">
          <Icon w={32}>
            <path d="M3 20C-1 9 9 0 19 2L15 5L24 6L21 9L29 8C33 19 25 30 15 30C9 29 5 26 3 20Z" fill="#12396a" />
            <path d="M3 20C-1 9 9 0 19 2C13 5 11 9 13 14L8 13L9 18Z" fill="#2c7cc4" />
            <path d="M13 13l4-5 4 3 5-4 1 8-2 3 2 4-5 1-2 5-6-1-5-5 2-5z" fill="#0b1830" />
            <path d="M4 21C7 29 16 31 22 28C16 28 10 25 8 18Z" fill="#1c5c9c" />
          </Icon>
        </Task>
        <Task aria-label="Player">
          <Icon w={30}>
            <circle cx="15" cy="15" r="14" fill="#111" stroke="#333" />
            <circle cx="15" cy="15" r="11.500" fill="#f8a01c" />
            <path d="M15 7L22 20H8Z" fill="#222" /><path d="M15 12.500L18 18H12Z" fill="#f8a01c" />
          </Icon>
        </Task>
        <Task aria-label="Cloud disk">
          <Icon w={32}>
            <rect width="32" height="32" rx="1" fill="#3898ec" />
            <path d="M0 27h32v4a1 1 0 0 1-1 1H1a1 1 0 0 1-1-1z" fill="#eef4f8" />
            <circle cx="27" cy="29.500" r="1.500" fill="#f09020" />
            <path d="M16 16C12 11 5 12 5.500 17.500C6 23 12 22 16 18C20 13 27 12 26.500 17.500C26 23 20 22 16 18M8 13C9 5 19 4 21 11" stroke="#fff" strokeWidth="2.200" />
          </Icon>
        </Task>
        <Task $state="open" aria-label="Messenger">
          <Icon w={32}>
            <circle cx="10" cy="9" r="8" fill="#00aff0" /><circle cx="22" cy="23" r="8" fill="#00aff0" /><circle cx="16" cy="16" r="13" fill="#00aff0" />
            <path d="M21.500 11.500C20 8.500 11 8 11 12.500C11 17 21.500 14.500 21.500 19.500C21.500 24 11.500 24 10.500 20" stroke="#fff" strokeWidth="3.500" strokeLinecap="round" />
          </Icon>
        </Task>
        <Task $state="open" aria-label="Lion">
          <Icon w={32}>
            <circle cx="16" cy="16" r="15" fill="#b8922c" stroke="#6c5010" />
            <circle cx="16" cy="16" r="12" fill="#6c5010" stroke="#e0bc50" />
            <path d="M16 5C9 6 7 13 9 21L12 27H20L23 21C25 13 23 6 16 5Z" fill="#b08c2c" />
            <path d="M13 11h6l1 6-2 5h-4l-2-5z" fill="#e8c860" />
            <path d="M12 14l3 1M20 14l-3 1M14 21h4M10 12v9M22 12v9M13 24h6M11 8l3 3M21 8l-3 3" stroke="#54400c" />
          </Icon>
        </Task>
        <Task $state="active" aria-label="Trading terminal"><Cii size={32} /></Task>
        <Task $state="open" aria-label="Paint">
          <Icon w={34} h={34}>
            <path d="M2 19C2 9 13 4 22 7C30 10 31 18 25 20C21 21 22 24 23 27C23 31 15 32 10 30C5 28 2 24 2 19Z" fill="#cfe6f6" stroke="#7ca8c8" />
            <circle cx="9" cy="15" r="3" fill="#e8d040" /><circle cx="16" cy="11" r="3" fill="#58b84c" /><circle cx="8" cy="22" r="3" fill="#d84030" /><circle cx="14" cy="26" r="3" fill="#3c74d0" /><circle cx="16" cy="19" r="2" fill="#222" />
            <path d="M22 31L27 9" stroke="#d88c34" strokeWidth="3" /><path d="M25 10L26 4L33 0L31 8L28 12Z" fill="#b88c64" />
          </Icon>
        </Task>
        <Tray>
          <Lang>RU</Lang>
          <TrayIcons>
            <Icon w={9} h={14}><path d="M1 9H8L4.500 5Z" fill="#fff" /></Icon>
            <Icon w={15} h={14}><path d="M1.500 14v-2M4.500 14v-4M7.500 14V8M10.500 14V5M13.500 14V2" stroke="#fff" strokeWidth="2" /></Icon>
            <Icon w={15} h={14}><path d="M1.500 0v14" stroke="#fff" /><path d="M2.500 1h6v2h5l-2 3 1 2H8V7H2.500z" fill="#fff" /></Icon>
            <Icon w={15} h={15}><path d="M8 2.500H2.500v10H8M4 1h3" stroke="#fff" strokeWidth="1.500" /><path d="M7 5h7v3l-2 2v2h-3v-2l-2-2zM8.500 2v3M12.500 2v3M10.500 12v3" fill="#fff" stroke="#fff" /></Icon>
            <Icon w={14} h={14}><path d="M1 5h3l4-4v12l-4-4H1z" fill="#fff" /><path d="M10 4c2 2 2 4 0 6" stroke="#fff" /></Icon>
          </TrayIcons>
          <DateText>ПН, 26<br />ЯНВ</DateText>
          <Clock>09:41</Clock>
          <ShowDesktop aria-label="Show desktop" />
        </Tray>
      </TaskBar>
    </Screen>
  );
}
